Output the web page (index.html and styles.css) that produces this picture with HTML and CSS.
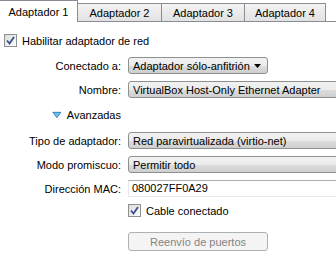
FILE: index.html
```html
<!DOCTYPE html>
<html lang="es">
<head>
    <meta charset="UTF-8">
    <title>Red</title>
    <link rel="stylesheet" href="styles.css">
</head>
<body>

<div class="tabs">
    <div class="tab active">Adaptador 1</div>
    <div class="tab t2">Adaptador 2</div>
    <div class="tab t3">Adaptador 3</div>
    <div class="tab t4">Adaptador 4</div>
    <div class="tab-rest"></div>
</div>

<div class="panel">
    <label class="check top-check">
        <span class="box"><svg width="9" height="9" viewBox="0 0 9 9"><path d="M1 4.5 L3.5 7.5 L8 1" fill="none" stroke="#3b4f8c" stroke-width="1.8"/></svg></span>
        Habilitar adaptador de red
    </label>

    <div class="form">
        <div class="label">Conectado a:</div>
        <div class="combo short">
            <span>Adaptador sólo-anfitrión</span>
            <svg class="arrow" width="7" height="4" viewBox="0 0 7 4"><path d="M0 0 L7 0 L3.5 4 Z" fill="#000"/></svg>
        </div>

        <div class="label">Nombre:</div>
        <div class="combo long"><span>VirtualBox Host-Only Ethernet Adapter</span></div>

        <div class="label adv">
            <svg width="11" height="8" viewBox="0 0 11 8"><path d="M1 1 L10 1 L5.5 7 Z" fill="#6cc3f0" stroke="#2b76b8" stroke-width="1"/></svg>
            Avanzadas
        </div>
        <div></div>

        <div class="label">Tipo de adaptador:</div>
        <div class="combo long"><span>Red paravirtualizada (virtio-net)</span></div>

        <div class="label">Modo promiscuo:</div>
        <div class="combo long"><span>Permitir todo</span></div>

        <div class="label">Dirección MAC:</div>
        <div class="field">080027FF0A29</div>

        <div></div>
        <label class="check">
            <span class="box"><svg width="9" height="9" viewBox="0 0 9 9"><path d="M1 4.5 L3.5 7.5 L8 1" fill="none" stroke="#3b4f8c" stroke-width="1.8"/></svg></span>
            Cable conectado
        </label>

        <div></div>
        <button class="btn" disabled>Reenvío de puertos</button>
    </div>
</div>

</body>
</html>
```

FILE: styles.css
```css
body {
    margin: 0;
    background: #fff;
    font-family: "Liberation Sans", Arial, sans-serif;
    font-size: 11px;
    color: #000;
    overflow: hidden;
}
.tabs {
    display: flex;
    align-items: flex-end;
    height: 22px;
}
.tab {
    height: 19px;
    line-height: 18px;
    box-sizing: border-box;
    padding: 0;
    text-align: center;
    white-space: nowrap;
    border: 1px solid #898c95;
    border-left: none;
    background: linear-gradient(#f3f3f3, #e2e2e2);
    color: #000;
}
.tab.active {
    height: 22px;
    line-height: 22px;
    width: 78px;
    background: #fff;
    border-bottom: none;
}
.tab.t2 {
    width: 84px;
}
.tab.t3 {
    width: 83px;
}
.tab.t4 {
    width: 81px;
}
.tab-rest {
    flex: 1;
    border-bottom: 1px solid #898c95;
}
.panel {
    padding: 12px 0 0 4px;
}
.check {
    display: flex;
    align-items: center;
    gap: 5px;
    height: 13px;
}
.box {
    width: 11px;
    height: 11px;
    border: 1px solid #8e8f8f;
    background: linear-gradient(135deg, #dcdcdc, #fdfdfd);
    display: flex;
    align-items: center;
    justify-content: center;
}
.form {
    display: grid;
    grid-template-columns: 117px 215px;
    column-gap: 7px;
    row-gap: 7px;
    margin-top: 10px;
    align-items: center;
}
.label {
    text-align: right;
    line-height: 16px;
}
.label.adv {
    text-align: left;
    padding-left: 48px;
    display: flex;
    align-items: center;
    gap: 5px;
    height: 20px;
}
.combo {
    height: 17px;
    box-sizing: border-box;
    border: 1px solid #8e8f8f;
    border-radius: 3px;
    background: linear-gradient(#f2f2f2 0%, #ebebeb 50%, #dddddd 51%, #cfcfcf 100%);
    padding: 0 4px;
    display: flex;
    align-items: center;
    justify-content: space-between;
    white-space: nowrap;
}
.combo.short {
    width: 140px;
}
.combo.long {
    width: 215px;
}
.arrow {
    margin-right: 2px;
}
.field {
    height: 17px;
    box-sizing: border-box;
    border: 1px solid #e3e9ef;
    border-top-color: #abadb3;
    line-height: 15px;
    padding: 0 3px;
}
.btn {
    width: 140px;
    height: 19px;
    border: 1px solid #adb2b5;
    border-radius: 3px;
    background: #f4f4f4;
    color: #838383;
    font-family: inherit;
    font-size: 11px;
    padding: 0;
    margin-top: 8px;
}
```
